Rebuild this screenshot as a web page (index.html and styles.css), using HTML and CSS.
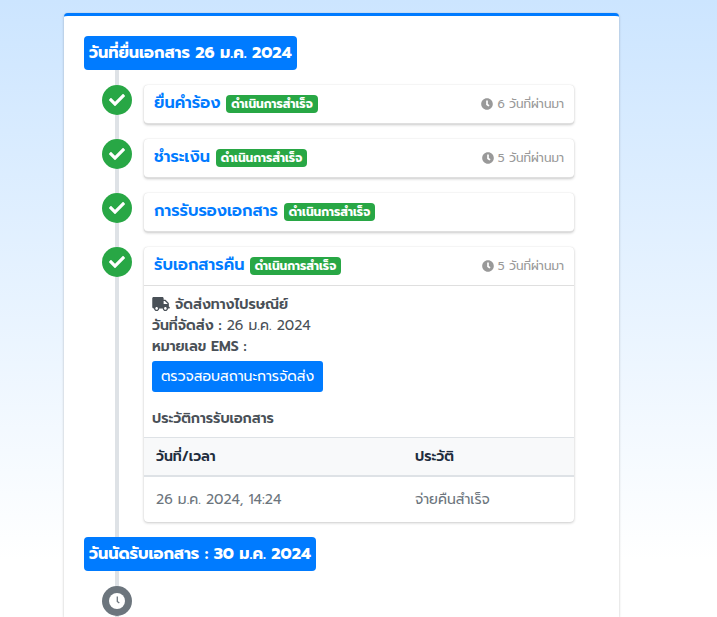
FILE: index.html
```html
<!DOCTYPE html>
<html lang="th">
<head>
    <meta charset="UTF-8">
    <meta name="viewport" content="width=device-width, initial-scale=1.0">
    <title>สถานะเอกสาร</title>
    <link rel="stylesheet" href="styles.css">
</head>
<body>
    <!-- icons -->
    <svg class="sprite">
        <symbol id="check" viewBox="0 0 512 512"><path d="M173.898 439.404l-166.4-166.4c-9.997-9.997-9.997-26.206 0-36.204l36.203-36.204c9.997-9.998 26.207-9.998 36.204 0L192 312.69 432.095 72.596c9.997-9.997 26.207-9.997 36.204 0l36.203 36.204c9.997 9.997 9.997 26.206 0 36.204l-294.4 294.401c-9.998 9.997-26.207 9.997-36.204-.001z"/></symbol>
        <symbol id="clock" viewBox="0 0 512 512"><path d="M256 8C119 8 8 119 8 256s111 248 248 248 248-111 248-248S393 8 256 8zm57.100 350.100L224.900 294c-3.100-2.300-4.900-5.900-4.900-9.700V116c0-6.600 5.400-12 12-12h48c6.600 0 12 5.400 12 12v137.700l63.500 46.200c5.400 3.900 6.500 11.400 2.600 16.800l-28.200 38.800c-3.900 5.300-11.400 6.500-16.800 2.600z"/></symbol>
        <symbol id="clock-thin" viewBox="0 0 16 16"><circle cx="8" cy="8" r="8"/><path d="M8.300 3.500v5l2 1.500" fill="none" stroke="#6c757d" stroke-width="1.300"/></symbol>
        <symbol id="truck" viewBox="0 0 640 512"><path d="M624 352h-16V243.900c0-12.700-5.100-24.900-14.100-33.900L494 110.100c-9-9-21.200-14.100-33.900-14.100H416V48c0-26.500-21.500-48-48-48H48C21.500 0 0 21.500 0 48v320c0 26.500 21.500 48 48 48h16c0 53 43 96 96 96s96-43 96-96h128c0 53 43 96 96 96s96-43 96-96h48c8.800 0 16-7.200 16-16v-32c0-8.800-7.200-16-16-16zM160 464c-26.500 0-48-21.500-48-48s21.500-48 48-48 48 21.500 48 48-21.500 48-48 48zm320 0c-26.500 0-48-21.500-48-48s21.500-48 48-48 48 21.500 48 48-21.500 48-48 48zm80-208H416V144h44.100l99.900 99.900V256z"/></symbol>
    </svg>

    <div class="card">
        <div class="timeline">
            <div class="time-label"><span class="label-start">วันที่ยื่นเอกสาร 26 ม.ค. 2024</span></div>

            <div class="row">
                <div class="dot bg-success"><svg><use href="#check"/></svg></div>
                <div class="item">
                    <div class="item-header">
                        <h3 class="t1">ยื่นคำร้อง</h3><span class="badge">ดำเนินการสำเร็จ</span>
                        <span class="time"><svg><use href="#clock"/></svg>6 วันที่ผ่านมา</span>
                    </div>
                </div>
            </div>

            <div class="row">
                <div class="dot bg-success"><svg><use href="#check"/></svg></div>
                <div class="item">
                    <div class="item-header">
                        <h3 class="t2">ชำระเงิน</h3><span class="badge">ดำเนินการสำเร็จ</span>
                        <span class="time"><svg><use href="#clock"/></svg>5 วันที่ผ่านมา</span>
                    </div>
                </div>
            </div>

            <div class="row">
                <div class="dot bg-success"><svg><use href="#check"/></svg></div>
                <div class="item">
                    <div class="item-header">
                        <h3 class="t3">การรับรองเอกสาร</h3><span class="badge">ดำเนินการสำเร็จ</span>
                    </div>
                </div>
            </div>

            <div class="row">
                <div class="dot bg-success"><svg><use href="#check"/></svg></div>
                <div class="item item-open">
                    <div class="item-header">
                        <h3 class="t4">รับเอกสารคืน</h3><span class="badge">ดำเนินการสำเร็จ</span>
                        <span class="time"><svg><use href="#clock"/></svg>5 วันที่ผ่านมา</span>
                    </div>
                    <div class="item-body">
                        <div class="line"><svg class="truck"><use href="#truck"/></svg><b>จัดส่งทางไปรษณีย์</b></div>
                        <div class="line"><b>วันที่จัดส่ง :</b> 26 ม.ค. 2024</div>
                        <div class="line"><b>หมายเลข EMS :</b></div>
                        <a class="btn" href="#">ตรวจสอบสถานะการจัดส่ง</a>
                        <div class="line history"><b>ประวัติการรับเอกสาร</b></div>
                    </div>
                    <table class="table">
                        <thead>
                            <tr><th>วันที่/เวลา</th><th>ประวัติ</th></tr>
                        </thead>
                        <tbody>
                            <tr><td>26 ม.ค. 2024, 14:24</td><td>จ่ายคืนสำเร็จ</td></tr>
                        </tbody>
                    </table>
                </div>
            </div>

            <div class="time-label"><span class="label-end">วันนัดรับเอกสาร : 30 ม.ค. 2024</span></div>

            <div class="row">
                <div class="dot bg-secondary"><svg><use href="#clock-thin"/></svg></div>
            </div>
        </div>
    </div>
</body>
</html>
```
FILE: styles.css
```css
* {
    box-sizing: border-box;
}

body {
    margin: 0;
    padding: 13px 98px 0 64px;
    height: 617px;
    overflow: hidden;
    font-family: 'Prompt', Inter, 'Noto Sans Thai', sans-serif;
    font-size: 14px;
    line-height: 21px;
    color: #495057;
    background: linear-gradient(#cce5ff, #fff 560px);
}

h3 {
    margin: 0;
}

b {
    font-weight: 600;
}

svg {
    fill: currentColor;
}

.sprite {
    display: none;
}

.card {
    height: 604px;
    padding: 20px 20px 0;
    background: #fff;
    border-top: 3px solid #007bff;
    border-radius: 4px 4px 0 0;
    box-shadow: 0 0 1px rgba(0, 0, 0, .125), 0 1px 3px rgba(0, 0, 0, .2);
}

.timeline {
    display: flex;
    flex-direction: column;
    gap: 15px;
    height: 581px;
    padding-right: 25px;
    background: linear-gradient(#dee2e6, #dee2e6) 31px 0 / 4px 100% no-repeat;
}

.time-label {
    display: flex;
}

.time-label span {
    height: 34px;
    padding: 0 5px;
    line-height: 35px;
    font-size: 16px;
    font-weight: 700;
    white-space: nowrap;
    color: #fff;
    background: #007bff;
    border-radius: 4px;
}

.time-label .label-start {
    width: 213px;
}

.time-label .label-end {
    width: 232px;
}

.row {
    display: flex;
    gap: 12px;
    padding-left: 18px;
}

.dot {
    display: flex;
    align-items: center;
    justify-content: center;
    flex: none;
    width: 30px;
    height: 30px;
    border-radius: 50%;
    color: #fff;
}

.dot svg {
    width: 16px;
    height: 16px;
}

.bg-success {
    background: #28a745;
}

.bg-secondary {
    background: #6c757d;
}

.item {
    flex: 1;
    height: 39px;
    background: #fff;
    border-radius: 4px;
    box-shadow: 0 0 1px rgba(0, 0, 0, .125), 0 1px 3px rgba(0, 0, 0, .2);
}

.item-open {
    height: 275px;
}

.item-header {
    display: flex;
    align-items: center;
    height: 39px;
    padding: 0 10px;
    border-bottom: 1px solid rgba(0, 0, 0, .125);
    border-radius: 4px;
}

.item-open .item-header {
    border-radius: 0;
}

.item-header h3 {
    line-height: 20px;
    margin-top: -2px;
    font-size: 16px;
    font-weight: 600;
    letter-spacing: .05px;
    white-space: nowrap;
    color: #007bff;
}

.t1 {
    width: 67px;
}

.t2 {
    width: 57px;
}

.t3 {
    width: 125px;
}

.t4 {
    width: 91px;
}

.badge {
    width: 91px;
    height: 18px;
    margin-left: 5px;
    line-height: 19px;
    font-size: 12px;
    font-weight: 700;
    text-align: center;
    white-space: nowrap;
    color: #fff;
    background: #28a745;
    border-radius: 4px;
}

.t1 + .badge {
    width: 92px;
}

.time {
    display: flex;
    align-items: center;
    gap: 4px;
    margin-left: auto;
    font-size: 12px;
    white-space: nowrap;
    color: #999;
}

.time svg {
    width: 12px;
    height: 12px;
}

.item-body {
    height: 151px;
    padding: 8px;
}

.line {
    height: 21px;
    white-space: nowrap;
}

.truck {
    width: 18px;
    height: 14px;
    margin-right: 5px;
    vertical-align: -2px;
}

.btn {
    display: block;
    width: 171px;
    height: 31px;
    margin-top: 4px;
    line-height: 31px;
    text-align: center;
    white-space: nowrap;
    text-decoration: none;
    color: #fff;
    background: #007bff;
    border-radius: 3px;
}

.history {
    margin-top: 16px;
}

.table {
    width: 100%;
    table-layout: fixed;
    border-collapse: collapse;
    text-align: left;
}

.table th {
    height: 38px;
    padding: 0 12px;
    font-weight: 600;
    color: #1f2d3d;
    background: #f8f9fa;
    border-top: 1px solid #dee2e6;
    border-bottom: 2px solid #dee2e6;
}

.table th:first-child {
    width: 259px;
}

.table td {
    height: 46px;
    padding: 0 12px;
    color: #6c757d;
}
```
